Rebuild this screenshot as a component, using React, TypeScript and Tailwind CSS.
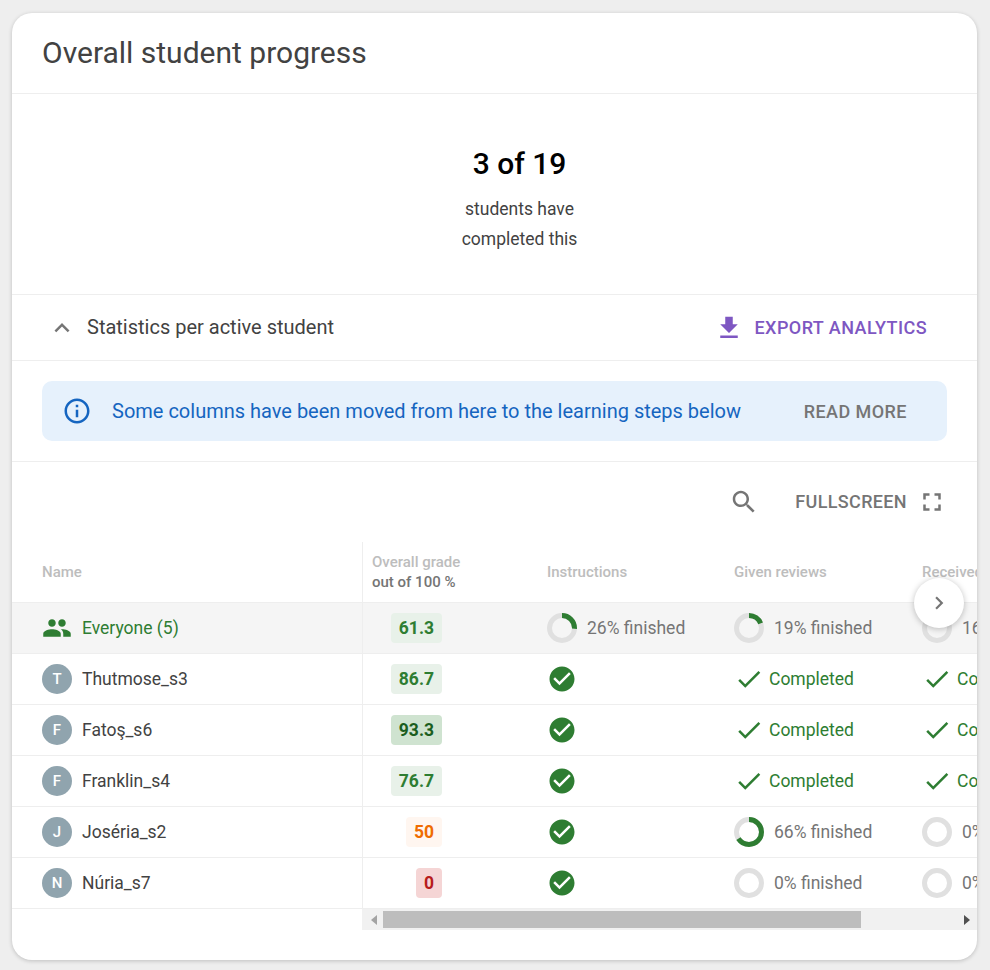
import React from 'react';

const paths = {
    download: 'M19 9h-4V3H9v6H5l7 7 7-7zM5 18v2h14v-2H5z',
    info: 'M11 7h2v2h-2zm0 4h2v6h-2zm1-9C6.48 2 2 6.48 2 12s4.48 10 10 10 10-4.48 10-10S17.52 2 12 2zm0 18c-4.41 0-8-3.59-8-8s3.59-8 8-8 8 3.59 8 8-3.59 8-8 8z',
    search: 'M15.5 14h-.79l-.28-.27C15.41 12.59 16 11.11 16 9.5 16 5.91 13.09 3 9.5 3S3 5.91 3 9.5 5.91 16 9.5 16c1.61 0 3.09-.59 4.23-1.57l.27.28v.79l5 4.99L20.49 19l-4.99-5zm-6 0C7.01 14 5 11.99 5 9.5S7.01 5 9.5 5 14 7.01 14 9.5 11.99 14 9.5 14z',
    fullscreen: 'M7 14H5v5h5v-2H7v-3zm-2-4h2V7h3V5H5v5zm12 7h-3v2h5v-5h-2v3zM14 5v2h3v3h2V5h-5z',
    people: 'M16 11c1.66 0 2.99-1.34 2.99-3S17.66 5 16 5c-1.66 0-3 1.34-3 3s1.34 3 3 3zm-8 0c1.66 0 2.99-1.34 2.99-3S9.66 5 8 5C6.34 5 5 6.34 5 8s1.34 3 3 3zm0 2c-2.33 0-7 1.17-7 3.5V19h14v-2.5c0-2.33-4.67-3.5-7-3.5zm8 0c-.29 0-.62.02-.97.05 1.16.84 1.97 1.97 1.97 3.45V19h6v-2.5c0-2.33-4.67-3.5-7-3.5z',
    expandLess: 'M12 8l-6 6 1.41 1.41L12 10.83l4.59 4.58L18 14z',
    chevronRight: 'M10 6L8.59 7.41 13.17 12l-4.58 4.59L10 18l6-6z',
    check: 'M9 16.17L4.83 12l-1.42 1.41L9 19 21 7l-1.41-1.41z',
    checkCircle: 'M12 2C6.48 2 2 6.48 2 12s4.48 10 10 10 10-4.48 10-10S17.52 2 12 2zm-2 15l-5-5 1.41-1.41L10 14.17l7.59-7.59L19 8l-9 9z',
};

function Icon({ d, className }: { d: string; className: string }) {
    return (
        <svg viewBox="0 0 24 24" fill="currentColor" className={className}>
            <path d={d} />
        </svg>
    );
}

function Ring({ pct }: { pct: number }) {
    return (
        <svg viewBox="0 0 30 30" className="w-[30px] h-[30px] shrink-0 -rotate-90">
            <circle cx="15" cy="15" r="12.5" fill="none" stroke="#e0e0e0" strokeWidth="5" />
            {pct > 0 && (
                <circle cx="15" cy="15" r="12.5" fill="none" stroke="#2e7d32" strokeWidth="5" pathLength={100} strokeDasharray={`${pct} 100`} />
            )}
        </svg>
    );
}

function Finished({ pct }: { pct: number }) {
    return (
        <div className="flex items-center gap-[10px] text-[#757575] whitespace-nowrap">
            <Ring pct={pct} />
            <span>{pct}% finished</span>
        </div>
    );
}

function Completed() {
    return (
        <div className="flex items-center gap-[5px] text-[#2e7d32] whitespace-nowrap">
            <Icon d={paths.check} className="w-[30px] h-[30px] shrink-0" />
            <span>Completed</span>
        </div>
    );
}

function Grade({ value, tone }: { value: string; tone: string }) {
    return <span className={`px-2 h-[30px] flex items-center rounded-[4px] font-bold ${tone}`}>{value}</span>;
}

const GREEN = 'bg-[#e8f1e9] text-[#2e7d32]';

const rows = [
    { name: 'Thutmose_s3', grade: '86.7', tone: GREEN, given: <Completed />, received: <Completed /> },
    { name: 'Fatoş_s6', grade: '93.3', tone: 'bg-[#cfe3d0] text-[#1b5e20]', given: <Completed />, received: <Completed /> },
    { name: 'Franklin_s4', grade: '76.7', tone: GREEN, given: <Completed />, received: <Completed /> },
    { name: 'Joséria_s2', grade: '50', tone: 'bg-[#fff6f0] text-[#ef6c00]', given: <Finished pct={66} />, received: <Finished pct={0} /> },
    { name: 'Núria_s7', grade: '0', tone: 'bg-[#f5d5d5] text-[#b71c1c]', given: <Finished pct={0} />, received: <Finished pct={0} /> },
];

function Row({ name, grade, instructions, given, received, className }: {
    name: React.ReactNode;
    grade: React.ReactNode;
    instructions: React.ReactNode;
    given: React.ReactNode;
    received: React.ReactNode;
    className?: string;
}) {
    return (
        <div className={`flex h-[51px] border-b border-[#eeeeee] ${className ?? ''}`}>
            <div className="w-[351px] shrink-0 flex items-center pl-[30px] border-r border-[#eeeeee]">{name}</div>
            <div className="w-[172px] shrink-0 flex justify-end items-center pr-[93px]">{grade}</div>
            <div className="w-[199px] shrink-0 pl-[12px] flex items-center">{instructions}</div>
            <div className="w-[188px] shrink-0 flex items-center">{given}</div>
            <div className="w-[188px] shrink-0 flex items-center">{received}</div>
        </div>
    );
}

export default function App() {
    return (
        <div className="w-[990px] h-[970px] bg-[#eeeeee] pt-[13px] pl-[12px] font-['Roboto',sans-serif] text-[#424242] text-[17.5px]">
            <div className="relative w-[965px] h-[947px] bg-white rounded-[20px] overflow-hidden shadow-[0_1px_4px_rgba(0,0,0,0.2)]">
                <div className="h-[81px] flex items-center px-[30px] border-b border-[#eeeeee]">
                    <h1 className="text-[30px] leading-none">Overall student progress</h1>
                </div>

                <div className="h-[201px] flex flex-col items-center border-b border-[#eeeeee] pt-[50px] pl-[50px]">
                    <div className="text-[30px] leading-[40px] font-medium text-black">3 of 19</div>
                    <div className="leading-[30px] mt-[10px] text-center">
                        students have
                        <br />
                        completed this
                    </div>
                </div>

                <div className="h-[66px] flex items-center justify-between border-b border-[#eeeeee] pl-[35px] pr-[50px]">
                    <div className="flex items-center gap-[10px] text-[20px]">
                        <Icon d={paths.expandLess} className="w-[30px] h-[30px] text-[#757575]" />
                        <span className="-mt-px">Statistics per active student</span>
                    </div>
                    <div className="flex items-center gap-[10px] text-[#7e57c2] font-medium text-[18px] tracking-[0.45px]">
                        <Icon d={paths.download} className="w-[30px] h-[30px]" />
                        <span>EXPORT ANALYTICS</span>
                    </div>
                </div>

                <div className="h-[101px] px-[30px] py-[20px] border-b border-[#eeeeee]">
                    <div className="h-[60px] rounded-[10px] bg-[#e6f1fc] flex items-center justify-between pl-[20px] pr-[40px]">
                        <div className="flex items-center gap-[20px] text-[#1565c0] text-[20px]">
                            <Icon d={paths.info} className="w-[30px] h-[30px]" />
                            <span>Some columns have been moved from here to the learning steps below</span>
                        </div>
                        <span className="text-[#757575] font-medium text-[18px] tracking-[0.45px]">READ MORE</span>
                    </div>
                </div>

                <div className="h-[80px] flex items-center justify-end pr-[30px] text-[#757575] font-medium text-[18px] tracking-[0.35px]">
                    <Icon d={paths.search} className="w-[30px] h-[30px] mr-[36px]" />
                    <span className="-mt-px">FULLSCREEN</span>
                    <Icon d={paths.fullscreen} className="w-[30px] h-[30px] ml-[10px]" />
                </div>

                <div className="flex h-[61px] border-b border-[#eeeeee] text-[15px] font-medium text-[#bdbdbd]">
                    <div className="w-[351px] shrink-0 flex items-center pl-[30px] border-r border-[#eeeeee]">Name</div>
                    <div className="w-[172px] shrink-0 flex flex-col justify-center pl-[9px] leading-[20px]">
                        <span>Overall grade</span>
                        <span className="text-[#757575]">out of 100 %</span>
                    </div>
                    <div className="w-[199px] shrink-0 pl-[12px] flex items-center">Instructions</div>
                    <div className="w-[188px] shrink-0 flex items-center">Given reviews</div>
                    <div className="w-[188px] shrink-0 flex items-center">Received reviews</div>
                </div>

                <Row
                    className="bg-[#f5f5f5]"
                    name={
                        <div className="flex items-center gap-[10px] text-[#2e7d32]">
                            <Icon d={paths.people} className="w-[30px] h-[30px]" />
                            <span>Everyone (5)</span>
                        </div>
                    }
                    grade={<Grade value="61.3" tone={GREEN} />}
                    instructions={<Finished pct={26} />}
                    given={<Finished pct={19} />}
                    received={<Finished pct={16} />}
                />
                {rows.map((r) => (
                    <Row
                        key={r.name}
                        name={
                            <div className="flex items-center gap-[10px]">
                                <span className="w-[30px] h-[30px] rounded-full bg-[#90a4ae] text-white text-[15px] font-medium flex items-center justify-center">{r.name[0]}</span>
                                <span>{r.name}</span>
                            </div>
                        }
                        grade={<Grade value={r.grade} tone={r.tone} />}
                        instructions={<Icon d={paths.checkCircle} className="w-[30px] h-[30px] -ml-[0.5px] text-[#2e7d32]" />}
                        given={r.given}
                        received={r.received}
                    />
                ))}

                <div className="ml-[350px] h-[21px] bg-[#f1f1f1] flex items-center justify-between">
                    <svg viewBox="0 0 6 10" className="w-[6px] h-[10px] ml-[9px] fill-[#a3a3a3]"><path d="M6 0v10L0 5z" /></svg>
                    <div className="absolute left-[371px] w-[478px] h-[17px] bg-[#bdbdbd]" />
                    <svg viewBox="0 0 6 10" className="w-[6px] h-[10px] mr-[7px] fill-[#505050]"><path d="M0 0v10l6-5z" /></svg>
                </div>

                <div className="absolute left-[902px] top-[565px] w-[50px] h-[50px] rounded-full bg-white shadow-[0_1px_6px_rgba(0,0,0,0.25)] flex items-center justify-center text-[#757575]">
                    <Icon d={paths.chevronRight} className="w-[26px] h-[26px]" />
                </div>
            </div>
        </div>
    );
}
